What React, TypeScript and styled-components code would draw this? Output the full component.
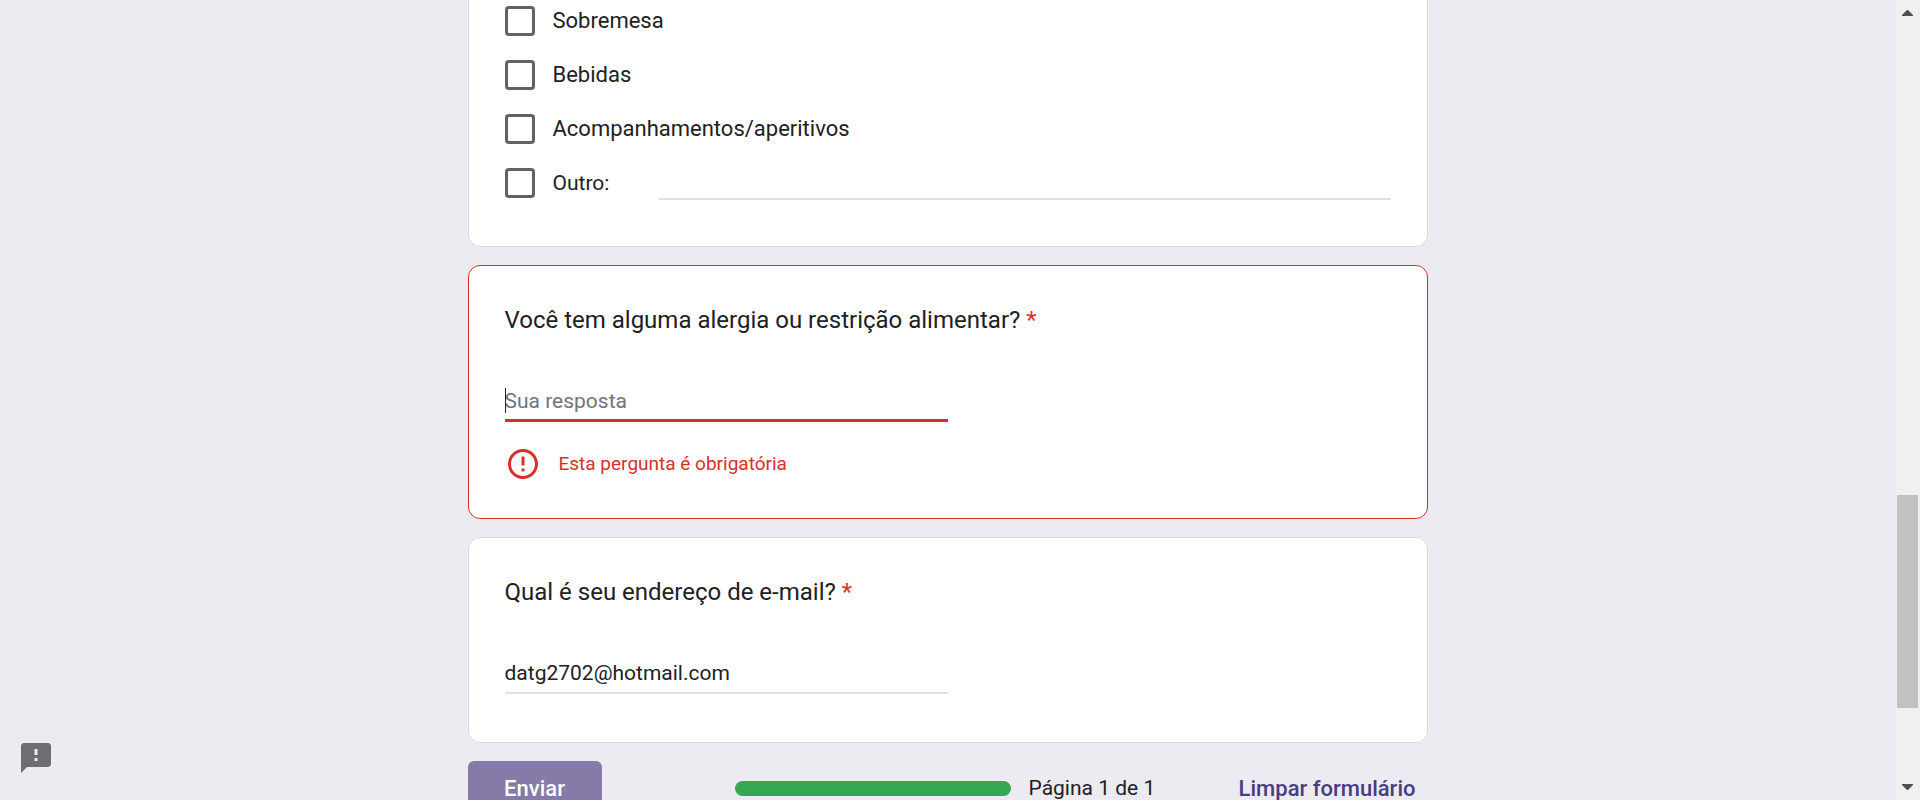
import React from "react";
import styled, { createGlobalStyle, css } from "styled-components";

const color = {
  page: "#ecebf1",
  text: "#202124",
  muted: "#70757a",
  line: "#dadce0",
  underline: "#e0e0e0",
  box: "#5f6368",
  error: "#d93025",
  submit: "#857aa8",
  clear: "#483d80",
  progress: "#34a853",
};

const GlobalStyle = createGlobalStyle`
  *, *::before, *::after { box-sizing: border-box; }
  body {
    margin: 0;
    overflow: hidden;
    background: ${color.page};
    color: ${color.text};
    font-family: Roboto, "Liberation Sans", sans-serif;
  }
  button, input { font-family: inherit; }
`;

const Shell = styled.div`
  display: grid;
  grid-template-columns: minmax(0, 1fr) 25px;
  height: 100vh;
  overflow: hidden;
`;

const Page = styled.main`
  min-width: 0;
  overflow: hidden;
`;

const Form = styled.form`
  display: flex;
  flex-direction: column;
  gap: 18px;
  max-width: 960px;
  margin: 0 auto;
`;

const Card = styled.section<{ $invalid?: boolean; $continued?: boolean }>`
  background: #fff;
  border: 1px solid ${(p) => (p.$invalid ? color.error : color.line)};
  border-radius: 12px;
  padding: 36px;
  ${(p) =>
    p.$continued &&
    css`
      border-top: 0;
      border-radius: 0 0 12px 12px;
      padding: 6px 36px 46px;
    `}
`;

const OptionList = styled.div`
  display: flex;
  flex-direction: column;
  gap: 24px;
`;

const OptionRow = styled.div`
  display: flex;
  align-items: flex-start;
`;

const Checkbox = styled.input`
  appearance: none;
  flex: none;
  width: 30px;
  height: 30px;
  margin: 0 18px 0 0;
  background: #fff;
  border: 3px solid ${color.box};
  border-radius: 4px;
`;

const OptionLabel = styled.label`
  font-size: 22px;
  line-height: 30px;
`;

const OtherLabel = styled.label`
  width: 106px;
  font-size: 21px;
  line-height: 30px;
`;

const OtherInput = styled.input`
  flex: 1;
  min-width: 0;
  height: 32px;
  padding: 0;
  border: 0;
  border-bottom: 2px solid ${color.underline};
  outline: 0;
  font-size: 21px;
`;

const Question = styled.label`
  display: block;
  margin-bottom: 45px;
  font-size: 24px;
  line-height: 36px;
`;

const Required = styled.span`
  color: ${color.error};
`;

const AnswerField = styled.div`
  position: relative;
  width: 50%;
  margin-bottom: 12px;
`;

const Answer = styled.input<{ $invalid?: boolean }>`
  display: block;
  width: 100%;
  height: 39px;
  padding: 0 0 ${(p) => (p.$invalid ? 0 : 2)}px;
  border: 0;
  border-bottom: ${(p) => (p.$invalid ? `3px solid ${color.error}` : `2px solid ${color.underline}`)};
  outline: 0;
  background: transparent;
  color: ${color.text};
  caret-color: transparent;
  font-size: 21px;
  &::placeholder {
    color: ${color.muted};
    opacity: 1;
  }
`;

const Caret = styled.span`
  position: absolute;
  top: 5px;
  left: 0;
  width: 1px;
  height: 25px;
  background: ${color.text};
  pointer-events: none;
`;

const ErrorMessage = styled.div`
  display: flex;
  align-items: center;
  gap: 18px;
  margin-top: 24px;
  color: ${color.error};
  font-size: 19px;
  line-height: 24px;
`;

const Icon = styled.svg`
  display: block;
  width: 36px;
  height: 36px;
  fill: currentColor;
`;

const Footer = styled.footer`
  display: flex;
  align-items: center;
`;

const FooterButton = styled.button`
  height: 54px;
  border: 0;
  font-size: 22px;
  font-weight: 500;
`;

const SubmitButton = styled(FooterButton)`
  min-width: 134px;
  padding: 0 36px;
  border-radius: 6px;
  background: ${color.submit};
  color: #fff;
`;

const ClearButton = styled(FooterButton)`
  margin-left: auto;
  padding: 0 12px;
  background: transparent;
  color: ${color.clear};
`;

const ProgressGroup = styled.div`
  display: flex;
  align-items: center;
  gap: 18px;
  margin-left: 133px;
  font-size: 21px;
  line-height: 30px;
`;

const ProgressTrack = styled.div`
  width: 276px;
  height: 15px;
  border-radius: 8px;
  background: ${color.progress};
`;

const FeedbackButton = styled.button`
  position: fixed;
  left: 18px;
  bottom: 24px;
  padding: 0;
  border: 0;
  background: transparent;
  color: #6e6e70;
`;

const ScrollBar = styled.div`
  display: flex;
  flex-direction: column;
  align-items: center;
  background: #f0f0f0;
`;

const ScrollArrow = styled.svg`
  display: block;
  flex: none;
  width: 25px;
  height: 26px;
  fill: #505050;
`;

const ScrollSpace = styled.div<{ $share: number }>`
  flex: ${(p) => p.$share} 1 0;
`;

const ScrollThumb = styled.div`
  flex: 213 1 0;
  width: 21px;
  background: #c1c1c1;
`;

const options = ["Sobremesa", "Bebidas", "Acompanhamentos/aperitivos"];

export default function App() {
  const [allergy, setAllergy] = React.useState("");

  return (
    <>
      <GlobalStyle />
      <Shell>
        <Page>
          <Form onSubmit={(e) => e.preventDefault()} noValidate>
            <Card $continued>
              <OptionList>
                {options.map((name, i) => (
                  <OptionRow key={name}>
                    <Checkbox type="checkbox" id={`option-${i}`} />
                    <OptionLabel htmlFor={`option-${i}`}>{name}</OptionLabel>
                  </OptionRow>
                ))}
                <OptionRow>
                  <Checkbox type="checkbox" id="option-other" />
                  <OtherLabel htmlFor="option-other">Outro:</OtherLabel>
                  <OtherInput type="text" aria-label="Outra resposta" />
                </OptionRow>
              </OptionList>
            </Card>

            <Card $invalid>
              <Question htmlFor="allergy">
                Você tem alguma alergia ou restrição alimentar? <Required>*</Required>
              </Question>
              <AnswerField>
                <Answer
                  $invalid
                  id="allergy"
                  type="text"
                  placeholder="Sua resposta"
                  aria-invalid="true"
                  aria-describedby="allergy-error"
                  value={allergy}
                  onChange={(e) => setAllergy(e.target.value)}
                />
                {allergy === "" && <Caret aria-hidden="true" />}
              </AnswerField>
              <ErrorMessage id="allergy-error" role="alert">
                <Icon viewBox="0 0 24 24" aria-hidden="true">
                  <path d="M11 15h2v2h-2zm0-8h2v6h-2zm.99-5C6.47 2 2 6.48 2 12s4.47 10 9.99 10C17.52 22 22 17.52 22 12S17.52 2 11.99 2zM12 20c-4.42 0-8-3.58-8-8s3.58-8 8-8 8 3.58 8 8-3.58 8-8 8z" />
                </Icon>
                <span>Esta pergunta é obrigatória</span>
              </ErrorMessage>
            </Card>

            <Card>
              <Question htmlFor="email">
                Qual é seu endereço de e-mail? <Required>*</Required>
              </Question>
              <AnswerField>
                <Answer id="email" type="email" defaultValue="datg2702@hotmail.com" />
              </AnswerField>
            </Card>

            <Footer>
              <SubmitButton type="submit">Enviar</SubmitButton>
              <ProgressGroup>
                <ProgressTrack role="progressbar" aria-valuenow={1} aria-valuemax={1} aria-label="Progresso" />
                <span>Página 1 de 1</span>
              </ProgressGroup>
              <ClearButton type="reset">Limpar formulário</ClearButton>
            </Footer>
          </Form>
        </Page>

        <ScrollBar aria-hidden="true">
          <ScrollArrow viewBox="0 0 25 26">
            <path d="M7 16v-1l5-5h1l5 5v1z" />
          </ScrollArrow>
          <ScrollSpace $share={469} />
          <ScrollThumb />
          <ScrollSpace $share={66} />
          <ScrollArrow viewBox="0 0 25 26">
            <path d="M7 10v1l5 5h1l5-5v-1z" />
          </ScrollArrow>
        </ScrollBar>
      </Shell>

      <FeedbackButton type="button" aria-label="Informar um problema">
        <Icon viewBox="0 0 24 24" aria-hidden="true">
          <path d="M20 2H4c-1.1 0-1.99.9-1.99 2L2 22l4-4h14c1.1 0 2-.9 2-2V4c0-1.1-.9-2-2-2zm-7 12h-2v-2h2v2zm0-4h-2V6h2v4z" />
        </Icon>
      </FeedbackButton>
    </>
  );
}
